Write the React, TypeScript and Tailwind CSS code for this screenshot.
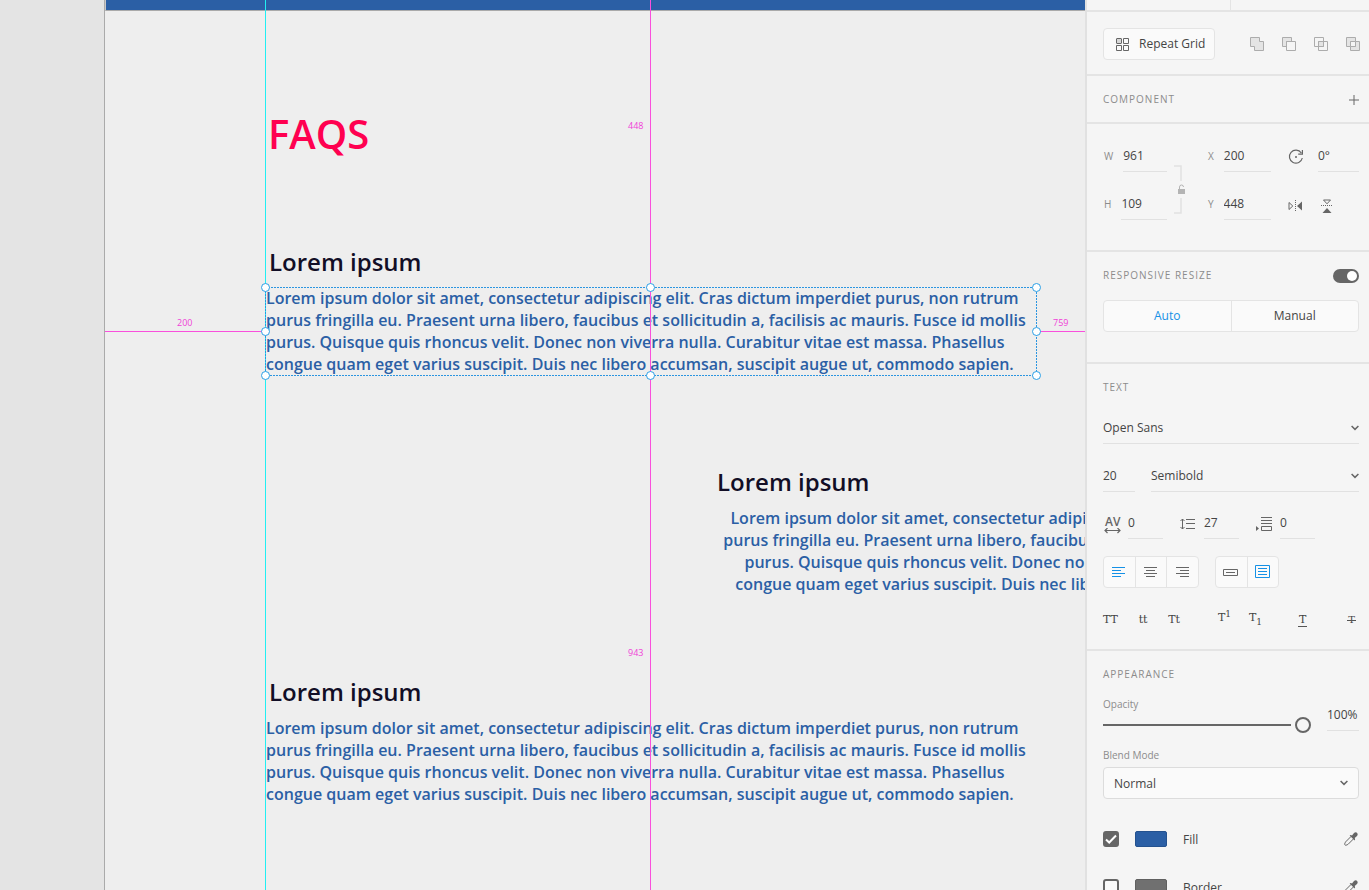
import type { ReactNode } from 'react';

const LINES = [
  'Lorem ipsum dolor sit amet, consectetur adipiscing elit. Cras dictum imperdiet purus, non rutrum',
  'purus fringilla eu. Praesent urna libero, faucibus et sollicitudin a, facilisis ac mauris. Fusce id mollis',
  'purus. Quisque quis rhoncus velit. Donec non viverra nulla. Curabitur vitae est massa. Phasellus',
  'congue quam eget varius suscipit. Duis nec libero accumsan, suscipit augue ut, commodo sapien.',
];

function TextBlock({ className }: { className: string }) {
  return (
    <p className={'absolute w-[771px] whitespace-nowrap text-base leading-[22px] font-semibold text-[#2b5fa5] ' + className}>
      {LINES.map((line) => (
        <span key={line} className="block">{line}</span>
      ))}
    </p>
  );
}

function Handle({ className }: { className: string }) {
  return <span className={'absolute size-[9px] rounded-full border border-[#2b9fe6] bg-white ' + className} />;
}

function Canvas() {
  return (
    <main className="relative min-w-0 flex-1 overflow-hidden bg-[#e4e4e4]">
      <div className="absolute inset-y-0 right-0 left-[104px] border-l border-[#aaaaaa] bg-[#eeeeee]">
        <div className="h-[11px] border-b border-l border-b-[#aaaaaa] border-l-[#c8c8c8] bg-[#2b5fa5]" />
      </div>
      <h1 className="absolute top-[106px] left-[268px] text-[40px] leading-[56px] font-semibold text-[#ff0050]">FAQS</h1>
      <h2 className="absolute top-[246px] left-[269px] text-2xl leading-8 font-semibold text-[#120e26]">Lorem ipsum</h2>
      <h2 className="absolute top-[466px] left-[717px] text-2xl leading-8 font-semibold text-[#120e26]">Lorem ipsum</h2>
      <h2 className="absolute top-[676px] left-[269px] text-2xl leading-8 font-semibold text-[#120e26]">Lorem ipsum</h2>
      <TextBlock className="top-[287px] left-[266px]" />
      <TextBlock className="top-[507px] left-[712px] text-right" />
      <TextBlock className="top-[717px] left-[266px]" />

      <div className="absolute inset-y-0 left-[265px] w-px bg-[#22eef2]" />
      <div className="absolute inset-y-0 left-[650px] w-px bg-[#f94fdc]" />
      <div className="absolute top-[331px] left-[105px] h-px w-[160px] bg-[#f94fdc]" />
      <div className="absolute top-[331px] right-0 left-[1037px] h-px bg-[#f94fdc]" />
      <div className="absolute top-[287px] left-[265px] h-[89px] w-[772px]">
        <svg className="absolute inset-0 size-full" fill="none" stroke="#2b95e0" strokeWidth="2" strokeDasharray="2 1">
          <rect width="100%" height="100%" />
        </svg>
        <Handle className="-top-1 -left-1" />
        <Handle className="-top-1 left-[381px]" />
        <Handle className="-top-1 -right-1" />
        <Handle className="top-[40px] -left-1" />
        <Handle className="top-[40px] -right-1" />
        <Handle className="-bottom-1 -left-1" />
        <Handle className="-bottom-1 left-[381px]" />
        <Handle className="-right-1 -bottom-1" />
      </div>
      <span className="absolute top-[119px] left-[628px] text-[9px] leading-[14px] text-[#f03fd8]">448</span>
      <span className="absolute top-[646px] left-[628px] text-[9px] leading-[14px] text-[#f03fd8]">943</span>
      <span className="absolute top-[316px] left-[177px] text-[9px] leading-[14px] text-[#f03fd8]">200</span>
      <span className="absolute top-[316px] left-[1053px] text-[9px] leading-[14px] text-[#f03fd8]">759</span>
    </main>
  );
}

function Section({ className, children }: { className: string; children: ReactNode }) {
  return <section className={'border-b-2 border-[#e4e4e4] pl-4 ' + className}>{children}</section>;
}

function Title({ children }: { children: ReactNode }) {
  return <h3 className="h-4 text-[10px] leading-[14px] tracking-[1px] text-[#8c8c8c] uppercase">{children}</h3>;
}

function Field({ id, label, value }: { id: string; label: ReactNode; value: string }) {
  return (
    <div className="flex gap-[10px] pl-px">
      <label htmlFor={id} className="shrink-0 text-[10px] leading-8 text-[#8c8c8c]">{label}</label>
      <input id={id} defaultValue={value} className="h-8 min-w-0 flex-1 border-b border-[#e1e1e1] bg-transparent text-xs outline-none" />
    </div>
  );
}

function Chevron({ className }: { className: string }) {
  return (
    <svg viewBox="0 0 8 6" className={'pointer-events-none absolute h-[6px] w-2 ' + className} fill="none" stroke="#666" strokeWidth="1.5">
      <path d="M.6 1 4 4.4 7.4 1" />
    </svg>
  );
}

function BoolIcon({ kind }: { kind: 'add' | 'subtract' | 'intersect' | 'exclude' }) {
  return (
    <svg viewBox="0 0 14 14" className="size-[14px]" fill="none" stroke="#acacac">
      {kind === 'add' && <path d="M.5.5h9v4h4v9h-9v-4h-4z" fill="#e4e4e4" />}
      {kind === 'subtract' && (
        <>
          <path d="M.5.5h9v4h-5v5h-4z" fill="#e4e4e4" />
          <path d="M4.5 4.5h9v9h-9z" />
        </>
      )}
      {kind === 'intersect' && (
        <>
          <path d="M4.5 4.5h5v5h-5z" fill="#e4e4e4" />
          <path d="M.5.5h9v9h-9zM4.5 4.5h9v9h-9z" />
        </>
      )}
      {kind === 'exclude' && (
        <>
          <path d="M.5.5h9v9h-9zM4.5 4.5h9v9h-9z" fill="#e4e4e4" />
          <path d="M4.5 4.5h5v5h-5z" fill="#f5f5f5" />
        </>
      )}
    </svg>
  );
}

function Lines({ d, box }: { d: string; box?: boolean }) {
  return (
    <svg viewBox="0 0 16 16" className="size-4" fill="none" stroke="currentColor">
      {box && <path d="M.5 1.5h14v12H.5z" />}
      <path d={d} />
    </svg>
  );
}

function Dropper() {
  return (
    <svg viewBox="0 0 14 14" className="size-[14px]" fill="none" stroke="#666">
      <path d="M7.2 4.3 1.6 9.9c-.5.5-.4 1.1-.9 1.9-.4.7.7 1.8 1.4 1.4.8-.5 1.5-.4 2-.9l5.6-5.6" />
      <path d="M5.6 3.4 6.8 2.900 8 3.400 10 1.100C11 .1 12.300 0 13.100.9s.8 2-.1 3L10.700 6l.4 1.300-.5 1.200z" fill="#666" stroke="none" />
    </svg>
  );
}

function PaintRow({ id, label, checked, swatch }: { id: string; label: string; checked?: boolean; swatch: string }) {
  return (
    <div className="flex h-12 items-start">
      <span className="relative size-4">
        <input
          id={id}
          type="checkbox"
          defaultChecked={checked}
          className="peer block size-4 appearance-none rounded-[3px] border-2 border-[#666] bg-[#fafafa] checked:bg-[#666]"
        />
        <svg viewBox="0 0 16 16" className="pointer-events-none absolute inset-0 hidden size-4 peer-checked:block" fill="none" stroke="#fff" strokeWidth="2">
          <path d="m3 8.500 3.200 3L13 4.500" />
        </svg>
      </span>
      <button aria-label={label + ' color'} className={'ml-4 h-4 w-8 rounded-[2px] border ' + swatch} />
      <label htmlFor={id} className="ml-4 text-xs leading-[18px]">{label}</label>
      <button aria-label={'Pick ' + label} className="mt-px mr-px ml-auto"><Dropper /></button>
    </div>
  );
}

const LEFT = 'M1 3.500h13M1 6.500h9M1 9.500h13M1 12.500h9';
const CENTER = 'M1 3.500h13M3 6.500h9M1 9.500h13M3 12.500h9';
const RIGHT = 'M1 3.500h13M5 6.500h9M1 9.500h13M5 12.500h9';

const segment = 'flex flex-1 items-center justify-center border-r border-[#e4e4e4] last:border-r-0';
const group = 'flex overflow-hidden rounded border border-[#e4e4e4] bg-[#fafafa]';
const spacing = 'h-[31px] w-[35px] border-b border-[#e1e1e1] bg-transparent pb-0.5 outline-none';

function Inspector() {
  return (
    <aside className="flex w-[284px] shrink-0 flex-col overflow-hidden border-l-2 border-[#e1e1e1] bg-[#f5f5f5] text-xs text-[#444]">
      <div className="grid h-3 shrink-0 grid-cols-[144px_1fr] border-b-2 border-[#e4e4e4]">
        <div className="border-r border-[#e4e4e4]" />
      </div>

      <Section className="flex h-16 shrink-0 items-center pt-[2px] pr-[9px]">
        <button className="flex h-8 w-28 items-center rounded border border-[#e4e4e4] bg-[#fafafa] pl-3">
          <svg viewBox="0 0 13 13" className="size-[13px]" fill="none" stroke="#666">
            <rect x=".5" y=".5" width="5" height="5" rx=".5" fill="#d8d8d8" />
            <path d="M7.500.5h5v5h-5zM.5 7.500h5v5h-5zM7.500 7.500h5v5h-5z" />
          </svg>
          <span className="ml-[10px]">Repeat Grid</span>
        </button>
        <div className="ml-auto flex gap-[18px]">
          <button aria-label="Add"><BoolIcon kind="add" /></button>
          <button aria-label="Subtract"><BoolIcon kind="subtract" /></button>
          <button aria-label="Intersect"><BoolIcon kind="intersect" /></button>
          <button aria-label="Exclude overlap"><BoolIcon kind="exclude" /></button>
        </div>
      </Section>

      <Section className="flex h-12 shrink-0 items-center justify-between pt-px pr-[10px]">
        <Title>Component</Title>
        <button aria-label="Add component">
          <svg viewBox="0 0 10 10" className="size-[10px]" stroke="#666"><path d="M5 0v10M0 5h10" /></svg>
        </button>
      </Section>

      <Section className="flex h-32 shrink-0 pt-4 pr-[10px]">
        <div className="flex w-16 flex-col gap-4">
          <Field id="w" label="W" value="961" />
          <Field id="h" label="H" value="109" />
        </div>
        <button aria-label="Lock aspect" className="mt-[25px] ml-[6px] h-[50px] w-3">
          <svg viewBox="0 0 12 50" className="h-[50px] w-3" fill="none" stroke="#e1e1e1" strokeWidth="1.500">
            <path d="M1 1h7v15M8 33v15H1" />
            <path d="M5 24h7v5H5z" fill="#b4b4b4" stroke="none" />
            <path d="M6.500 24v-2a2 2 0 0 1 4 0" stroke="#b4b4b4" strokeWidth="1" />
          </svg>
        </button>
        <div className="ml-[22px] flex w-16 flex-col gap-4">
          <Field id="x" label="X" value="200" />
          <Field id="y" label="Y" value="448" />
        </div>
        <div className="ml-auto flex w-[71px] flex-col gap-4">
          <div className="flex h-8 gap-[14px]">
            <label htmlFor="angle" aria-label="Rotation" className="pt-[9px]">
              <svg viewBox="0 0 16 16" className="size-4" fill="none" stroke="#666" strokeWidth="1.200">
                <path d="M14.300 9a6.500 6.500 0 1 1-1-5M14.400 1v4.200h-4.200" />
                <circle cx="8" cy="8" r="1" fill="#666" stroke="none" />
              </svg>
            </label>
            <input id="angle" defaultValue="0°" className="h-8 min-w-0 flex-1 border-b border-[#e1e1e1] bg-transparent outline-none" />
          </div>
          <div className="flex h-8 items-center gap-[18px] pt-[3px]">
            <button aria-label="Flip horizontal">
              <svg viewBox="0 0 14 14" className="size-[14px]" fill="none" stroke="#666">
                <path d="M1 3.500 4.800 7 1 10.500z" />
                <path d="M7.500 1v12" strokeDasharray="1 1" />
                <path d="M14 2.500v9L9 7z" fill="#666" stroke="none" />
              </svg>
            </button>
            <button aria-label="Flip vertical">
              <svg viewBox="0 0 14 14" className="size-[14px]" fill="none" stroke="#666">
                <path d="M3.500 1h7L7 4.800z" />
                <path d="M1 6.500h12" strokeDasharray="1 1" />
                <path d="M2.500 14h9L7 9z" fill="#666" stroke="none" />
              </svg>
            </button>
          </div>
        </div>
      </Section>

      <Section className="h-28 shrink-0 pt-4 pr-[10px]">
        <div className="flex h-4 items-center justify-between">
          <Title>Responsive Resize</Title>
          <input type="checkbox" defaultChecked aria-label="Responsive Resize" className="flex h-[14px] w-[26px] appearance-none items-center justify-end rounded-full bg-[#666] px-0.5 before:size-[10px] before:rounded-full before:bg-white" />
        </div>
        <div className={group + ' mt-4 h-8'}>
          <button className={segment + ' text-[#1591e6]'}>Auto</button>
          <button className={segment}>Manual</button>
        </div>
      </Section>

      <Section className="h-[287px] shrink-0 pt-4 pr-[10px]">
        <Title>Text</Title>
        <div className="relative mt-4">
          <select aria-label="Font" className="block h-8 w-full appearance-none border-b border-[#e1e1e1] bg-transparent outline-none">
            <option>Open Sans</option>
          </select>
          <Chevron className="top-[13px] right-0" />
        </div>
        <div className="mt-4 flex gap-4">
          <input aria-label="Font size" defaultValue="20" className="h-8 w-8 border-b border-[#e1e1e1] bg-transparent outline-none" />
          <div className="relative flex-1">
            <select aria-label="Font weight" className="block h-8 w-full appearance-none border-b border-[#e1e1e1] bg-transparent outline-none">
              <option>Semibold</option>
            </select>
            <Chevron className="top-[13px] right-0" />
          </div>
        </div>
        <div className="mt-4 flex h-8">
          <label htmlFor="kern" aria-label="Character spacing" className="w-[25px] pt-2 pl-px">
            <span className="block pl-px text-[12px] leading-3 font-semibold text-[#666]">AV</span>
            <svg viewBox="0 0 18 6" className="h-[6px] w-[18px]" fill="none" stroke="#666" strokeWidth="1.200"><path d="M1 2.500h15M3.500 0 1 2.500 3.500 5M13.500 0 16 2.500 13.500 5" /></svg>
          </label>
          <input id="kern" defaultValue="0" className={spacing} />
          <label htmlFor="leading" aria-label="Line spacing" className="ml-4 w-[25px] pt-[10px] pl-px">
            <svg viewBox="0 0 16 12" className="h-3 w-4" fill="none" stroke="#666"><path d="M6 1.500h9M6 5.500h9M6 10.500h9M2.500 1v10M.5 3l2-2 2 2M.5 9l2 2 2-2" /></svg>
          </label>
          <input id="leading" defaultValue="27" className={spacing} />
          <label htmlFor="para" aria-label="Paragraph spacing" className="ml-4 w-[25px] pt-2 pl-px">
            <svg viewBox="0 0 17 16" className="h-4 w-[17px]" fill="none" stroke="#666"><path d="M5 1.500h11M5 4.500h11M5 7.500h11M5.500 10.500h10v4h-10z" /><path d="M0 10v5l3-2.500z" fill="#666" stroke="none" /></svg>
          </label>
          <input id="para" defaultValue="0" className={spacing} />
        </div>
        <div className="mt-4 flex gap-4 text-[#666]">
          <div className={group + ' h-8 w-24'}>
            <button aria-label="Align left" className={segment + ' text-[#1591e6]'}><Lines d={LEFT} /></button>
            <button aria-label="Align center" className={segment}><Lines d={CENTER} /></button>
            <button aria-label="Align right" className={segment}><Lines d={RIGHT} /></button>
          </div>
          <div className={group + ' h-8 w-16'}>
            <button aria-label="Point text" className={segment}><Lines d="M.5 5.500h14v6H.5zM3 8.500h9" /></button>
            <button aria-label="Area text" className={segment + ' text-[#1591e6]'}><Lines box d="M3 4.500h9M3 7.500h9M3 10.500h9" /></button>
          </div>
        </div>
        <div className="mt-6 flex h-4 items-center font-['DejaVu_Serif',serif] text-[11px] leading-4 text-[#444]">
          <div className="flex w-[77px] justify-between">
            <button>TT</button>
            <button>tt</button>
            <button>Tt</button>
          </div>
          <div className="ml-[38px] flex w-11 justify-between">
            <button className="flex">T<span className="-mt-1 text-[9px] leading-4">1</span></button>
            <button className="flex">T<span className="mt-1 text-[9px] leading-4">1</span></button>
          </div>
          <button className="ml-9 h-[14px] border-b border-[#555] px-px leading-[14px]">T</button>
          <button className="relative mr-[3px] ml-auto px-px text-[10px] after:absolute after:inset-x-0 after:top-2 after:h-px after:bg-[#555]">T</button>
        </div>
      </Section>

      <section className="shrink-0 pt-4 pr-[10px] pl-4">
        <Title>Appearance</Title>
        <div className="mt-3 flex">
          <div className="flex-1">
            <label htmlFor="opacity" className="block text-[10px] leading-[18px] text-[#8c8c8c]">Opacity</label>
            <input
              id="opacity"
              type="range"
              defaultValue={100}
              className="mt-1 block h-4 w-[208px] appearance-none bg-[linear-gradient(#666,#666)] bg-[length:188px_2px] bg-[left_center] bg-no-repeat [&::-webkit-slider-thumb]:size-4 [&::-webkit-slider-thumb]:appearance-none [&::-webkit-slider-thumb]:rounded-full [&::-webkit-slider-thumb]:border-2 [&::-webkit-slider-thumb]:border-solid [&::-webkit-slider-thumb]:border-[#666]"
            />
          </div>
          <input aria-label="Opacity value" defaultValue="100%" className="mt-1 h-8 w-8 border-b border-[#e1e1e1] bg-transparent outline-none" />
        </div>
        <label htmlFor="blend" className="mt-[14px] block text-[10px] leading-4 text-[#8c8c8c]">Blend Mode</label>
        <div className="relative mt-1">
          <select id="blend" className="block h-8 w-full appearance-none rounded border border-[#dcdcdc] bg-[#fafafa] pt-px pl-[10px] outline-none">
            <option>Normal</option>
          </select>
          <Chevron className="top-[13px] right-[11px]" />
        </div>
        <div className="mt-8">
          <PaintRow id="fill" label="Fill" checked swatch="border-[#24528f] bg-[#2b5fa5]" />
          <PaintRow id="border" label="Border" swatch="border-[#606060] bg-[#707070]" />
        </div>
      </section>
    </aside>
  );
}

export default function App() {
  return (
    <div className="flex h-screen overflow-hidden font-['Open_Sans','Noto_Sans',sans-serif]">
      <Canvas />
      <Inspector />
    </div>
  );
}
